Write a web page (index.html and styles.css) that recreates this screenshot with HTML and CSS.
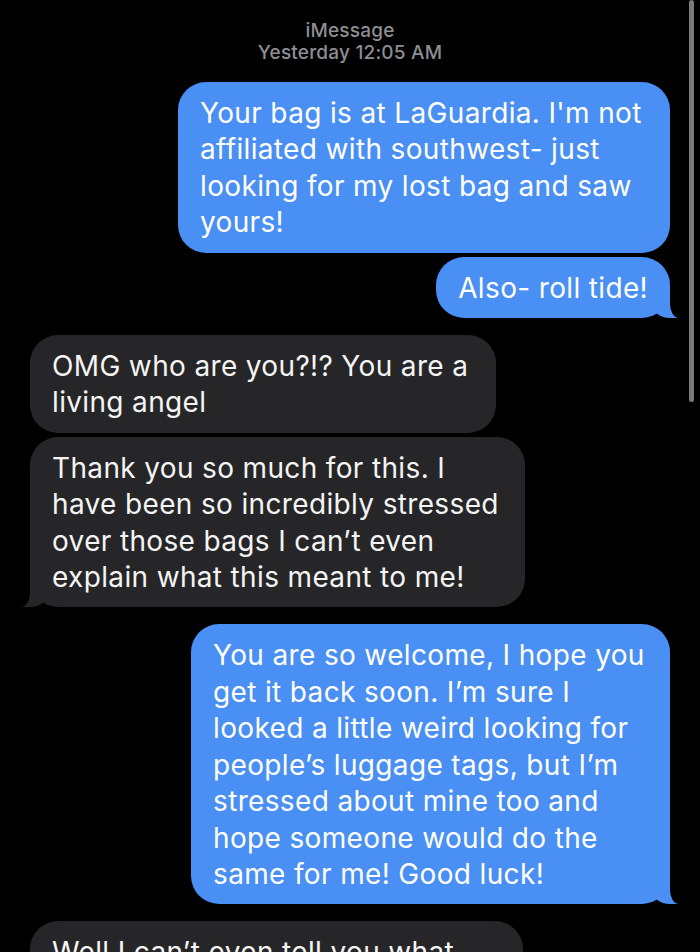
FILE: index.html
```html
<!DOCTYPE html>
<html lang="en">
<head>
<meta charset="utf-8">
<title>iMessage</title>
<link rel="stylesheet" href="styles.css">
</head>
<body>
<div class="screen">
  <div class="thread">
    <div class="stamp">
      <div>iMessage</div>
      <div>Yesterday 12:05 AM</div>
    </div>

    <div class="group sent">
      <div class="bubble b1"><span class="txt">Your bag is at LaGuardia. I'm not<br>affiliated with southwest- just<br>looking for my lost bag and saw<br>yours!</span></div>
      <div class="bubble b2 tail"><span class="txt">Also- roll tide!</span></div>
    </div>

    <div class="group received">
      <div class="bubble b3"><span class="txt">OMG who are you?!? You are a<br>living angel</span></div>
      <div class="bubble b4 tail"><span class="txt">Thank you so much for this. I<br>have been so incredibly stressed<br>over those bags I can’t even<br>explain what this meant to me!</span></div>
    </div>

    <div class="group sent">
      <div class="bubble b5 tail"><span class="txt">You are so welcome, I hope you<br>get it back soon. I’m sure I<br>looked a little weird looking for<br>people’s luggage tags, but I’m<br>stressed about mine too and<br>hope someone would do the<br>same for me! Good luck!</span></div>
    </div>

    <div class="group received">
      <div class="bubble b6"><span class="txt">Well I can’t even tell you what<br>this means to me</span></div>
    </div>
  </div>
  <div class="scrollbar"></div>
</div>
</body>
</html>
```

FILE: styles.css
```css
* { box-sizing: border-box; }

html, body {
  margin: 0;
  padding: 0;
  background: #000;
}

body {
  font-family: "Inter", "Roboto", sans-serif;
  color: #fff;
}

.screen {
  position: relative;
  width: 700px;
  height: 952px;
  overflow: hidden;
  background: #000;
}

.thread {
  display: flex;
  flex-direction: column;
  gap: 17px;
  padding: 20px 30px 0 30px;
}

.stamp {
  text-align: center;
  color: #8e8e93;
  font-size: 19px;
  line-height: 22px;
  font-weight: 500;
  letter-spacing: 0.2px;
  margin-bottom: 1px;
}

.group {
  display: flex;
  flex-direction: column;
  gap: 4px;
}

.group.sent { align-items: flex-end; }
.group.received { align-items: flex-start; }

.bubble {
  position: relative;
  border-radius: 28px;
  padding: 13px 22px 12px 22px;
  font-size: 28px;
  line-height: 36.4px;
  letter-spacing: 0.35px;
  white-space: nowrap;
}

.txt {
  position: relative;
  z-index: 2;
}

.sent .bubble { background: #4a8ff4; color: #fff; }
.received .bubble { background: #262628; color: #f4f4f4; }

.b1 { width: 492px; }
.b3 { width: 466px; }
.b4 { width: 495px; }
.b5 { width: 479px; }
.b6 { width: 493px; }

/* tails */
.bubble.tail::before,
.bubble.tail::after {
  content: "";
  position: absolute;
  bottom: 0;
  height: 28px;
}

.sent .bubble.tail::before {
  right: -9px;
  width: 27px;
  background: #4a8ff4;
  border-bottom-left-radius: 18px 14px;
  z-index: 0;
}
.sent .bubble.tail::after {
  right: -14px;
  width: 14px;
  background: #000;
  border-bottom-left-radius: 9px 14px;
  z-index: 1;
}

.received .bubble.tail::before {
  left: -9px;
  width: 27px;
  background: #262628;
  border-bottom-right-radius: 18px 14px;
  z-index: 0;
}
.received .bubble.tail::after {
  left: -14px;
  width: 14px;
  background: #000;
  border-bottom-right-radius: 9px 14px;
  z-index: 1;
}

.scrollbar {
  position: absolute;
  z-index: 5;
  top: 0;
  left: 689px;
  width: 5px;
  height: 402px;
  border-radius: 3px;
  background: #7a7a7c;
}
```
